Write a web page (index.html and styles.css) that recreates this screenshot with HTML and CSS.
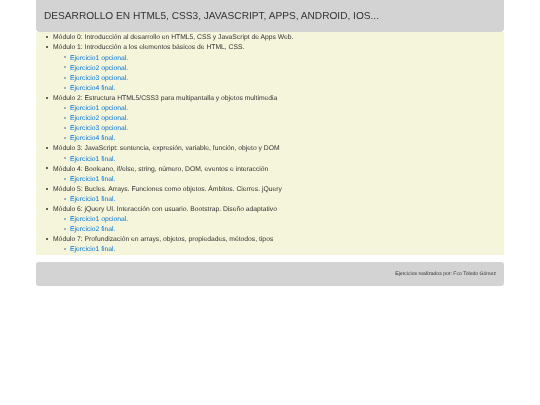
FILE: index.html

```html
<!DOCTYPE html>
<html lang="en">
<head>
  <meta charset="UTF-8" />
  <title>Desarrollo en HTML5</title>
  <link rel="stylesheet" href="styles.css">
</head>
<body>
  <div class="container">
    <header class="jumbo">
      <h1>DESARROLLO EN HTML5, CSS3, JAVASCRIPT, APPS, ANDROID, IOS...</h1>
    </header>
    <ul class="modules">
      <li>Módulo 0: Introducción al desarrollo en HTML5, CSS y JavaScript de Apps Web.</li>
      <li>Módulo 1: Introducción a los elementos básicos de HTML, CSS.
        <ul>
          <li><a href="#">Ejercicio1 opcional.</a></li>
          <li><a href="#">Ejercicio2 opcional.</a></li>
          <li><a href="#">Ejercicio3 opcional.</a></li>
          <li><a href="#">Ejercicio4 final.</a></li>
        </ul>
      </li>
      <li>Módulo 2: Estructura HTML5/CSS3 para multipantalla y objetos multimedia
        <ul>
          <li><a href="#">Ejercicio1 opcional.</a></li>
          <li><a href="#">Ejercicio2 opcional.</a></li>
          <li><a href="#">Ejercicio3 opcional.</a></li>
          <li><a href="#">Ejercicio4 final.</a></li>
        </ul>
      </li>
      <li>Módulo 3: JavaScript: sentencia, expresión, variable, función, objeto y DOM
        <ul>
          <li><a href="#">Ejercicio1 final.</a></li>
        </ul>
      </li>
      <li>Módulo 4: Booleano, if/else, string, número, DOM, eventos e interacción
        <ul>
          <li><a href="#">Ejercicio1 final.</a></li>
        </ul>
      </li>
      <li>Módulo 5: Bucles. Arrays. Funciones como objetos. Ámbitos. Cierres. jQuery
        <ul>
          <li><a href="#">Ejercicio1 final.</a></li>
        </ul>
      </li>
      <li>Módulo 6: jQuery UI. Interacción con usuario. Bootstrap. Diseño adaptativo
        <ul>
          <li><a href="#">Ejercicio1 opcional.</a></li>
          <li><a href="#">Ejercicio2 final.</a></li>
        </ul>
      </li>
      <li>Módulo 7: Profundización en arrays, objetos, propiedades, métodos, tipos
        <ul>
          <li><a href="#">Ejercicio1 final.</a></li>
        </ul>
      </li>
    </ul>
    <footer class="foot">Ejercicios realizados por: Fco Toledo Gómez</footer>
  </div>
</body>
</html>
```

FILE: styles.css

```css
body { margin: 0; background: #fff; font-family: "Liberation Sans", Arial, sans-serif; font-size: 6.75px; line-height: 10.1px; color: #333; text-rendering: geometricPrecision; }
.container { width: 468px; margin: 0 auto; filter: blur(0.35px); }
.jumbo { height: 32px; background: #d3d3d3; border-radius: 0 0 4px 4px; padding: 2px 8px 0; box-sizing: border-box; display: flex; align-items: center; }
h1 { margin: 0; font-size: 10.13px; font-weight: normal; line-height: 16px; }
.modules { margin: 0; padding: 1.4px 0 0 17px; height: 221.6px; background: #f5f5dc; list-style: none; }
.modules ul { margin: 0; padding: 0 0 0 17px; list-style: none; }
.modules li::before { content: ""; display: inline-block; width: 2px; height: 2px; margin: 0 5px 0.8px -7px; border-radius: 50%; background: #333; vertical-align: middle; }
.modules ul li::before { margin: 0 4px 0.8px -6px; background: #89a; }
a { color: #0275d8; text-decoration: none; }
.foot { margin-top: 7px; height: 24px; background: #d3d3d3; border-radius: 3px; padding: 0 8px; display: flex; align-items: center; justify-content: flex-end; font-size: 5.1px; }
```
